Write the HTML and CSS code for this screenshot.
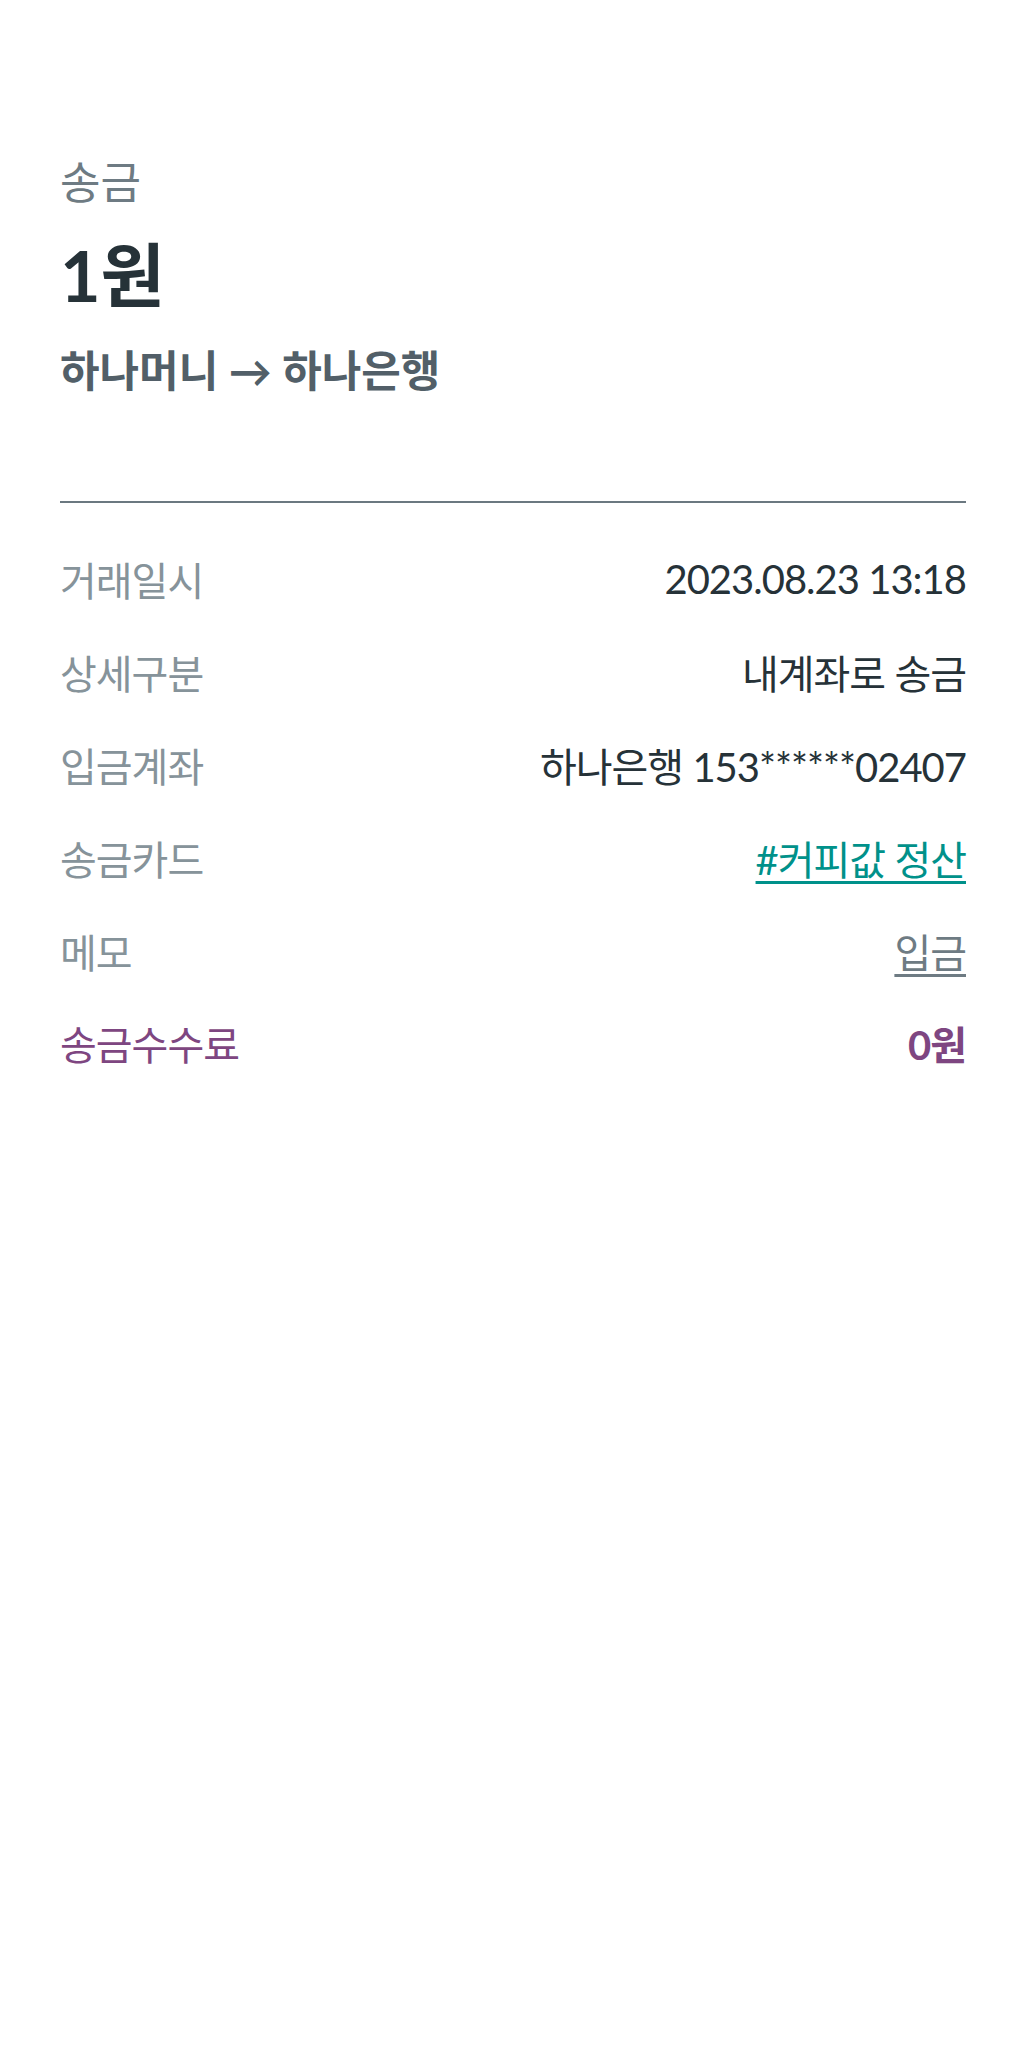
FILE: index.html
```html
<!DOCTYPE html>
<html lang="ko">
<head>
    <meta charset="UTF-8">
    <meta name="viewport" content="width=device-width, initial-scale=1.0">
    <title>거래내역 상세</title>
    <link rel="stylesheet" href="styles.css">
</head>
<body>
    <div class="detail">
        <div class="summary">
            <div class="kind">송금</div>
            <div class="amount">1원</div>
            <div class="route">하나머니 → 하나은행</div>
        </div>

        <ul class="info-list">
            <li class="info-row">
                <span class="info-label">거래일시</span>
                <span class="info-value">2023.08.23 13:18</span>
            </li>
            <li class="info-row">
                <span class="info-label">상세구분</span>
                <span class="info-value">내계좌로 송금</span>
            </li>
            <li class="info-row">
                <span class="info-label">입금계좌</span>
                <span class="info-value">하나은행 153******02407</span>
            </li>
            <li class="info-row">
                <span class="info-label">송금카드</span>
                <a class="info-value card-link" href="#">#커피값 정산</a>
            </li>
            <li class="info-row">
                <span class="info-label">메모</span>
                <a class="info-value memo-link" href="#">입금</a>
            </li>
            <li class="info-row fee">
                <span class="info-label">송금수수료</span>
                <span class="info-value">0원</span>
            </li>
        </ul>
    </div>
</body>
</html>
```

FILE: styles.css
```css
body {
    margin: 0;
    background-color: #fff;
    font-family: "Lato", "Noto Sans CJK KR", sans-serif;
    color: #263238;
}
.detail {
    padding: 152px 58px 0 60px;
}
.summary {
    padding-bottom: 100px;
    border-bottom: 2px solid #6b7880;
}
.kind {
    font-size: 44px;
    line-height: 60px;
    color: #6e7b83;
}
.amount {
    margin-top: 18px;
    font-size: 70px;
    line-height: 90px;
    font-weight: bold;
    color: #263238;
}
.route {
    margin-top: 21px;
    font-size: 43px;
    line-height: 60px;
    font-weight: bold;
    color: #525f68;
}
.info-list {
    list-style: none;
    margin: 30px 0 0;
    padding: 0;
}
.info-row {
    display: flex;
    justify-content: space-between;
    align-items: center;
    height: 92.8px;
    font-size: 40px;
    letter-spacing: -1px;
}
.info-label {
    color: #86939a;
}
.info-value {
    color: #263238;
}
.card-link {
    color: #00918a;
    text-decoration-thickness: 3px;
    text-underline-offset: 6px;
}
.memo-link {
    color: #6e7b83;
    text-decoration-thickness: 3px;
    text-underline-offset: 6px;
}
.fee .info-label {
    color: #7e4681;
}
.fee .info-value {
    color: #7e4681;
    font-weight: bold;
}
```
